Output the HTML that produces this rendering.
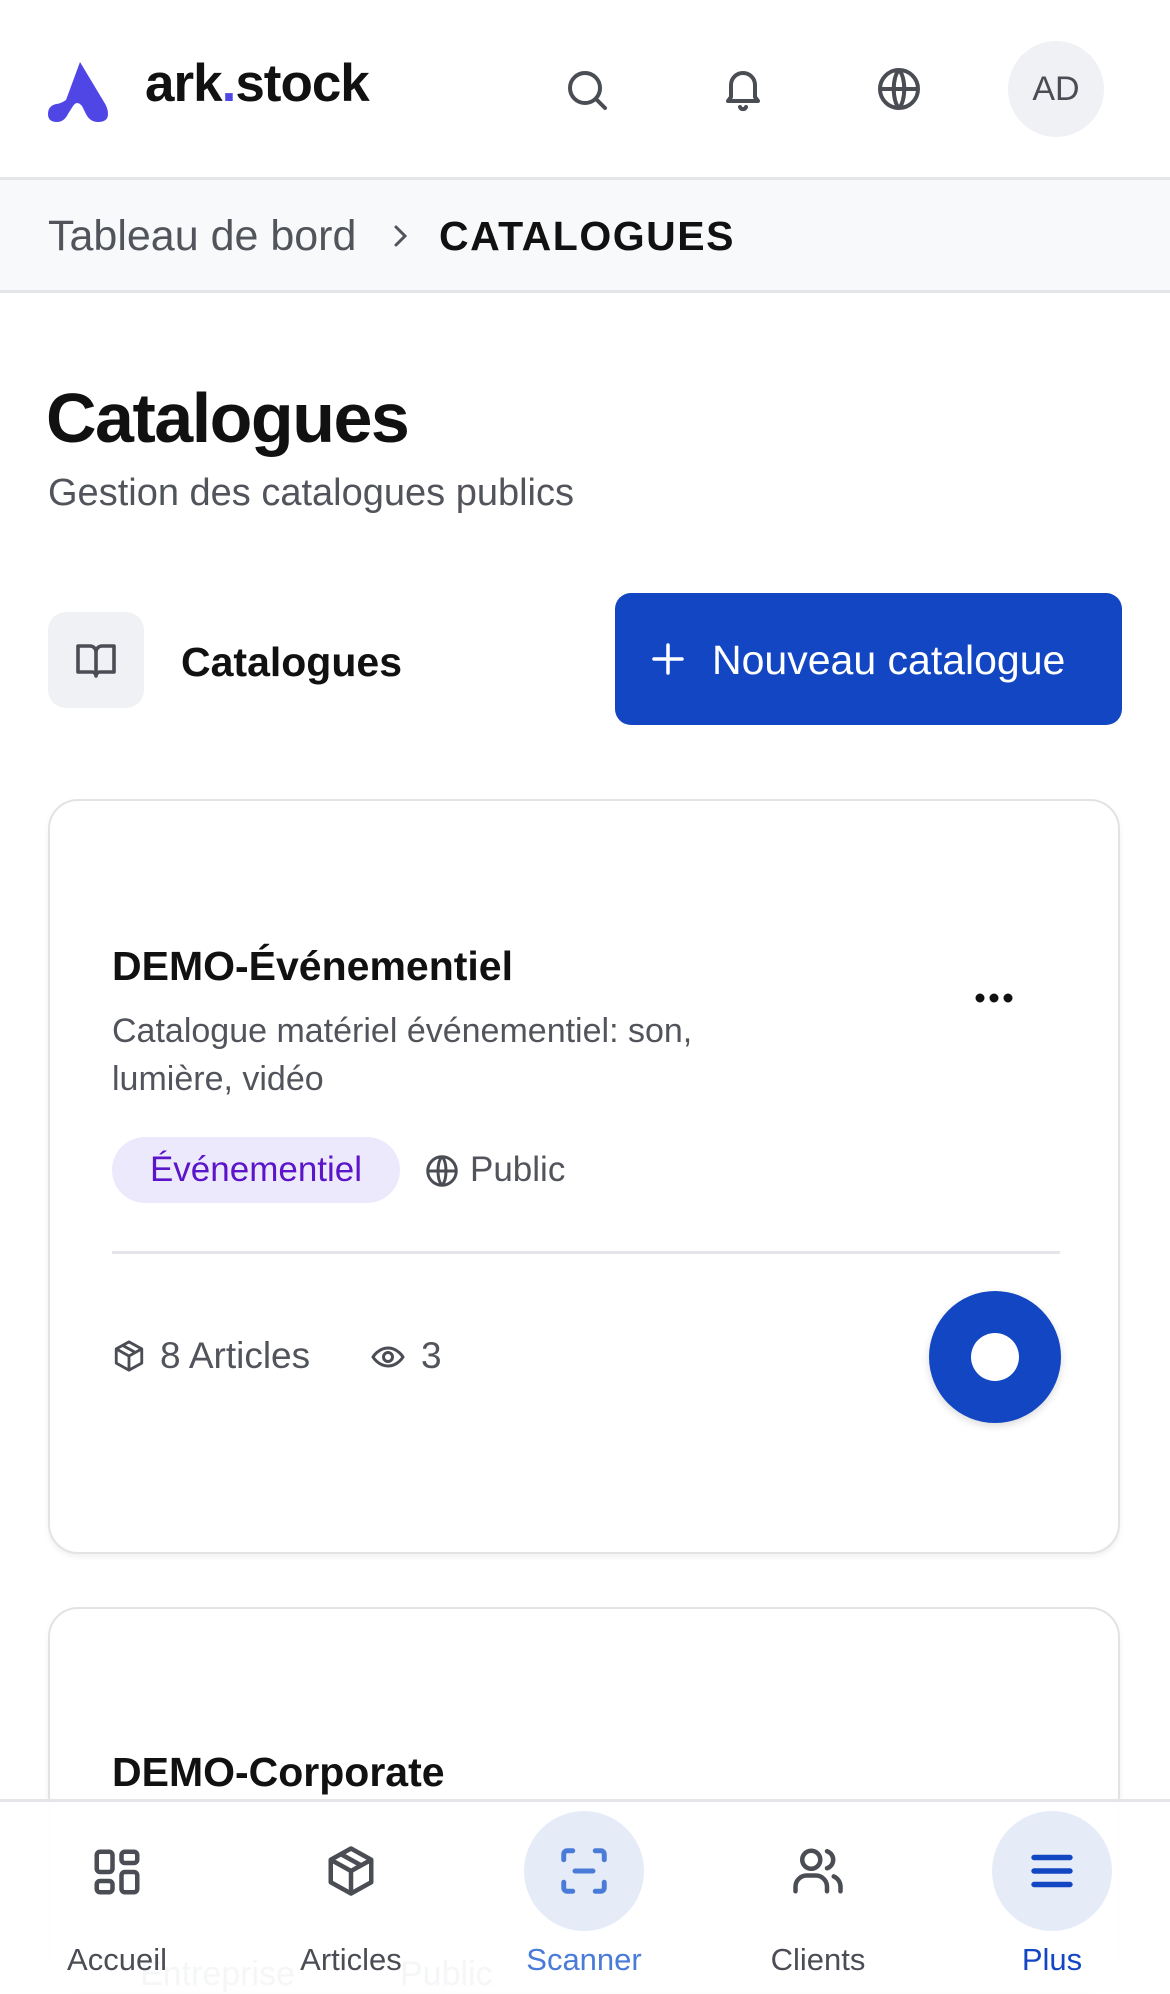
<!DOCTYPE html>
<html><head><meta charset="utf-8">
<style>
*{margin:0;padding:0;box-sizing:border-box}
html,body{width:1170px;height:1992px;overflow:hidden;background:#fff;font-family:"Liberation Sans",sans-serif;color:#111}
.abs{position:absolute}
.hdr{position:absolute;left:0;top:0;width:1170px;height:180px;border-bottom:3px solid #e4e5e8;background:#fff}
.bc{position:absolute;left:0;top:180px;width:1170px;height:113px;background:#f8f9fb;border-bottom:3px solid #e4e5e8}
.card{position:absolute;left:48px;width:1072px;border:2px solid #e3e3e6;border-radius:30px;background:#fff;box-shadow:0 3px 6px rgba(0,0,0,.06)}
svg{display:block}
</style></head><body>
<div class="hdr">
  <svg class="abs" style="left:46px;top:60px" width="66" height="62" viewBox="0 0 66 62">
    <path d="M34 2 L20 40 Q14 44 10 44 Q2 46 2 54 Q2 62 11 62 Q18 62 22 54 L27 46 Q31 40 36 46 L40 54 Q44 62 52 62 Q62 62 62 54 Q62 48 58 42 Z" fill="#4f46e5"/>
  </svg>
  <div class="abs" style="left:145px;top:52px;font-size:53px;font-weight:700;letter-spacing:-1px;line-height:64px">ark<span style="color:#4f46e5">.</span>stock</div>
  <svg class="abs" style="left:563px;top:66px" width="48" height="48" viewBox="0 0 24 24" fill="none" stroke="#4b4d55" stroke-width="2" stroke-linecap="round"><circle cx="11" cy="11" r="7.5"/><path d="M16.5 16.5L21 21"/></svg>
  <svg class="abs" style="left:719px;top:64px" width="48" height="50" viewBox="0 0 24 24" fill="none" stroke="#4b4d55" stroke-width="2" stroke-linecap="round" stroke-linejoin="round"><path d="M6 16V10a6 6 0 0 1 12 0v6l1.5 2h-15z"/><path d="M10.5 21a1.6 1.6 0 0 0 3 0"/></svg>
  <svg class="abs" style="left:875px;top:65px" width="48" height="48" viewBox="0 0 24 24" fill="none" stroke="#4b4d55" stroke-width="2"><circle cx="12" cy="12" r="9.5"/><path d="M2.5 12h19M12 2.5c-3.5 3.5-3.5 15.5 0 19M12 2.5c3.5 3.5 3.5 15.5 0 19"/></svg>
  <div class="abs" style="left:1008px;top:41px;width:96px;height:96px;border-radius:50%;background:#f0f1f4;text-align:center;line-height:96px;font-size:34px;color:#4b4d55">AD</div>
</div>
<div class="bc">
  <div class="abs" style="left:48px;top:32px;font-size:43px;color:#52545c;line-height:48px">Tableau de bord</div>
  <svg class="abs" style="left:388px;top:41px" width="24" height="30" viewBox="0 0 24 30" fill="none" stroke="#52545c" stroke-width="3" stroke-linecap="round"><path d="M8 6l9 9-9 9"/></svg>
  <div class="abs" style="left:439px;top:32px;font-size:41px;font-weight:700;letter-spacing:1.5px;color:#111;line-height:48px">CATALOGUES</div>
</div>
<div class="abs" style="left:46px;top:376px;font-size:70px;font-weight:700;letter-spacing:-1.5px;line-height:84px">Catalogues</div>
<div class="abs" style="left:48px;top:470px;font-size:38px;color:#52545c;line-height:46px">Gestion des catalogues publics</div>

<div class="abs" style="left:48px;top:612px;width:96px;height:96px;border-radius:18px;background:#f0f1f4"></div>
<svg class="abs" style="left:72px;top:636px" width="48" height="48" viewBox="0 0 24 24" fill="none" stroke="#4b4d55" stroke-width="1.8" stroke-linejoin="round"><path d="M3 5h6a3 3 0 0 1 3 3v12a2 2 0 0 0-2-2H3zM21 5h-6a3 3 0 0 0-3 3v12a2 2 0 0 1 2-2h7z"/></svg>
<div class="abs" style="left:181px;top:638px;font-size:41px;font-weight:700;line-height:48px;color:#111">Catalogues</div>
<div class="abs" style="left:615px;top:593px;width:507px;height:132px;border-radius:16px;background:#1246c2"></div>
<svg class="abs" style="left:650px;top:641px" width="36" height="36" viewBox="0 0 36 36" stroke="#fff" stroke-width="3.5" stroke-linecap="round"><path d="M18 4v28M4 18h28"/></svg>
<div class="abs" style="left:712px;top:636px;font-size:41px;color:#fff;line-height:48px">Nouveau catalogue</div>

<div class="card" style="top:799px;height:755px">
  <div class="abs" style="left:62px;top:140px;font-size:41px;font-weight:700;line-height:50px">DEMO-Événementiel</div>
  <svg class="abs" style="left:924px;top:190px" width="40" height="14" viewBox="0 0 40 14" fill="#111"><circle cx="6" cy="7" r="4.5"/><circle cx="20" cy="7" r="4.5"/><circle cx="34" cy="7" r="4.5"/></svg>
  <div class="abs" style="left:62px;top:206px;font-size:34px;color:#52545c;line-height:48px;width:700px">Catalogue matériel événementiel: son,<br>lumière, vidéo</div>
  <div class="abs" style="left:62px;top:336px;width:288px;height:66px;border-radius:33px;background:#ede9fd;color:#5b14c8;font-size:35px;line-height:66px;text-align:center">Événementiel</div>
  <svg class="abs" style="left:374px;top:352px" width="36" height="36" viewBox="0 0 24 24" fill="none" stroke="#4b4d55" stroke-width="2"><circle cx="12" cy="12" r="9.5"/><path d="M2.5 12h19M12 2.5c-3.5 3.5-3.5 15.5 0 19M12 2.5c3.5 3.5 3.5 15.5 0 19"/></svg>
  <div class="abs" style="left:420px;top:346px;font-size:35px;color:#52545c;line-height:46px">Public</div>
  <div class="abs" style="left:62px;top:450px;width:948px;height:3px;background:#e4e5e8"></div>
  <svg class="abs" style="left:62px;top:538px" width="34" height="34" viewBox="0 0 24 24" fill="none" stroke="#4b4d55" stroke-width="2" stroke-linejoin="round"><path d="M12 2l9 5v10l-9 5-9-5V7z"/><path d="M3 7l9 5 9-5M12 12v10M7.5 4.5l9 5"/></svg>
  <div class="abs" style="left:110px;top:532px;font-size:37px;color:#52545c;line-height:46px">8 Articles</div>
  <svg class="abs" style="left:320px;top:538px" width="36" height="36" viewBox="0 0 24 24" fill="none" stroke="#4b4d55" stroke-width="2"><path d="M2 12s3.5-6 10-6 10 6 10 6-3.5 6-10 6S2 12 2 12z"/><circle cx="12" cy="12" r="3"/></svg>
  <div class="abs" style="left:371px;top:532px;font-size:37px;color:#52545c;line-height:46px">3</div>
  <div class="abs" style="left:879px;top:490px;width:132px;height:132px;border-radius:50%;background:#1246c2;box-shadow:0 3px 8px rgba(0,0,0,.15)"></div>
  <div class="abs" style="left:921px;top:532px;width:48px;height:48px;border-radius:50%;background:#fff"></div>
</div>
<div class="card" style="top:1607px;height:380px">
  <div class="abs" style="left:62px;top:138px;font-size:41px;font-weight:700;line-height:50px">DEMO-Corporate</div>
</div>

<div class="abs" style="left:0;top:1799px;width:1170px;height:193px;background:rgba(255,255,255,.97);border-top:3px solid #e4e5e8"></div>
<div class="abs" style="left:140px;top:1955px;font-size:34px;color:#f5f6f7">Entreprise</div>
<div class="abs" style="left:400px;top:1955px;font-size:34px;color:#f5f6f7">Public</div>
<div class="abs" style="left:524px;top:1811px;width:120px;height:120px;border-radius:50%;background:#e5ecf8"></div>
<div class="abs" style="left:992px;top:1811px;width:120px;height:120px;border-radius:50%;background:#e5ecf8"></div>
<svg class="abs" style="left:90px;top:1845px" width="54" height="54" viewBox="0 0 24 24" fill="none" stroke="#4b4d55" stroke-width="2" stroke-linejoin="round"><rect x="3" y="3" width="7" height="9" rx="1.5"/><rect x="14" y="3" width="7" height="5" rx="1.5"/><rect x="14" y="12" width="7" height="9" rx="1.5"/><rect x="3" y="16" width="7" height="5" rx="1.5"/></svg>
<svg class="abs" style="left:324px;top:1844px" width="54" height="54" viewBox="0 0 24 24" fill="none" stroke="#4b4d55" stroke-width="2" stroke-linejoin="round"><path d="M12 2l9 5v10l-9 5-9-5V7z"/><path d="M3 7l9 5 9-5M12 12v10M7.5 4.5l9 5"/></svg>
<svg class="abs" style="left:557px;top:1844px" width="54" height="54" viewBox="0 0 24 24" fill="none" stroke="#4a7bd9" stroke-width="2.2" stroke-linecap="round"><path d="M3 7V4.5A1.5 1.5 0 0 1 4.5 3H7M17 3h2.5A1.5 1.5 0 0 1 21 4.5V7M21 17v2.5a1.5 1.5 0 0 1-1.5 1.5H17M7 21H4.5A1.5 1.5 0 0 1 3 19.5V17M8 12h8"/></svg>
<svg class="abs" style="left:790px;top:1844px" width="56" height="54" viewBox="0 0 24 24" fill="none" stroke="#4b4d55" stroke-width="2" stroke-linecap="round"><circle cx="9" cy="7" r="4"/><path d="M2 21v-2a5 5 0 0 1 5-5h4a5 5 0 0 1 5 5v2M16 3.2a4 4 0 0 1 0 7.6M22 21v-2a5 5 0 0 0-3-4.6"/></svg>
<svg class="abs" style="left:1025px;top:1844px" width="54" height="54" viewBox="0 0 24 24" fill="none" stroke="#1246c2" stroke-width="2.4" stroke-linecap="round"><path d="M4 6h16M4 12h16M4 18h16"/></svg>
<div class="abs" style="left:17px;top:1942px;width:200px;text-align:center;font-size:31px;color:#4b4d55">Accueil</div>
<div class="abs" style="left:251px;top:1942px;width:200px;text-align:center;font-size:31px;color:#4b4d55">Articles</div>
<div class="abs" style="left:484px;top:1942px;width:200px;text-align:center;font-size:31px;color:#4a7bd9">Scanner</div>
<div class="abs" style="left:718px;top:1942px;width:200px;text-align:center;font-size:31px;color:#4b4d55">Clients</div>
<div class="abs" style="left:952px;top:1942px;width:200px;text-align:center;font-size:31px;color:#1246c2">Plus</div>
</body></html>
